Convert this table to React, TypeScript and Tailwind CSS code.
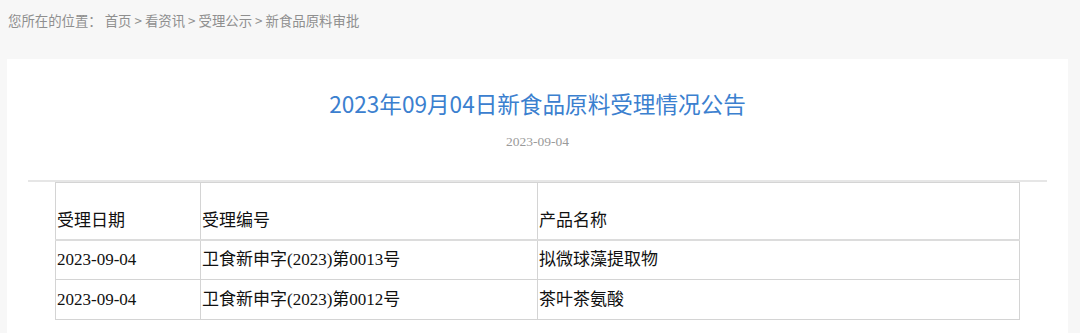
const ROWS = [
  { date: '2023-09-04', code: '卫食新申字(2023)第0013号', name: '拟微球藻提取物' },
  { date: '2023-09-04', code: '卫食新申字(2023)第0012号', name: '茶叶茶氨酸' },
]

const serif = "font-['Liberation_Serif','Noto_Sans_CJK_SC',serif]"

export default function App() {
  return (
    <div className="min-h-screen bg-[#f7f7f7] font-['Noto_Sans_CJK_SC',sans-serif]">
      {/* breadcrumb */}
      <div className="h-[59px] pl-2 pt-[10px] text-[13.4px] leading-5 text-[#8f8f8f]">
        您所在的位置：&nbsp;首页 &gt; 看资讯 &gt; 受理公示 &gt; 新食品原料审批
      </div>

      <div className="mx-[7px] mr-[12px] bg-white pb-6">
        <h1 className="pt-[30px] text-center text-[22.6px] leading-[30px] text-[#3b80cf]">
          2023年09月04日新食品原料受理情况公告
        </h1>
        <p className={`mt-[13px] text-center text-[13.5px] leading-5 text-[#9a9a9a] ${serif}`}>2023-09-04</p>

        <div className="mx-[21px] mt-[28px] border-t-2 border-[#e6e6e6] px-[27px]">
          <table className={`w-full border-collapse text-[17px] text-[#111] ${serif}`}>
            <colgroup>
              <col className="w-[145px]" />
              <col className="w-[337px]" />
              <col />
            </colgroup>
            <tbody>
              <tr className="h-[57px] border-b-2 border-[#dcdcdc]">
                <td className="border border-[#d4d4d4] px-[1px] pb-[5px] align-bottom">受理日期</td>
                <td className="border border-[#d4d4d4] px-[1px] pb-[5px] align-bottom">受理编号</td>
                <td className="border border-[#d4d4d4] px-[1px] pb-[5px] align-bottom">产品名称</td>
              </tr>
              {ROWS.map((r, i) => (
                <tr key={i} className="h-[40px]">
                  <td className="border border-[#d4d4d4] px-[1px] align-middle">{r.date}</td>
                  <td className="border border-[#d4d4d4] px-[1px] align-middle">{r.code}</td>
                  <td className="border border-[#d4d4d4] px-[1px] align-middle">{r.name}</td>
                </tr>
              ))}
            </tbody>
          </table>
        </div>
      </div>
    </div>
  )
}
